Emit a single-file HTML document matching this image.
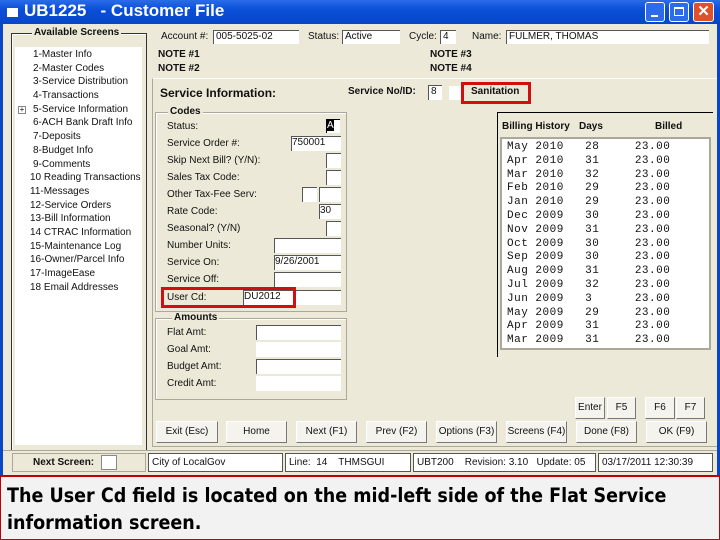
<!DOCTYPE html><html><head><style>
*{margin:0;padding:0;box-sizing:border-box}
body{width:720px;height:540px;position:relative;overflow:hidden;background:#ece9d8;font-family:"Liberation Sans",sans-serif;font-size:10px;color:#111}
.a{position:absolute}
.w{background:#fff}
.in{background:#fff;border-top:1px solid #555;border-left:1px solid #555}
.btn{position:absolute;background:#f4f3ee;border:1px solid #fff;border-right:1px solid #777;border-bottom:1px solid #777;text-align:center;font-size:10px;line-height:20px;height:22px}
.grp{position:absolute;border:1px solid #aca899;box-shadow:inset 1px 1px #fff}
.lt{position:absolute;background:#ece9d8;font-weight:bold;padding:0 2px}
.red{position:absolute;border:3px solid #d01010}
.mono{font-family:"Liberation Mono",monospace;font-size:11px;white-space:pre;line-height:13.8px}
.tree div{height:13.7px;line-height:13.7px;white-space:nowrap}
</style></head><body>
<div class="a" style="left:0;top:0;width:720px;height:24px;background:linear-gradient(#2a6be8,#0a4fd8 40%,#0846c8)"></div>
<div class="a" style="left:7px;top:8px;width:11px;height:9px;background:#fff"></div>
<div class="a" style="left:24px;top:1px;color:#fff;font-weight:bold;font-size:17px;white-space:pre">UB1225   - Customer File</div>
<div class="a" style="left:645px;top:2px;width:20px;height:20px;background:#2c6bea;border:1px solid #fff;border-radius:3px"><div class="a" style="left:5px;top:12px;width:7px;height:2px;background:#fff"></div></div>
<div class="a" style="left:669px;top:2px;width:20px;height:20px;background:#2c6bea;border:1px solid #fff;border-radius:3px"><div class="a" style="left:4px;top:4px;width:10px;height:9px;border:1px solid #fff;border-top:2px solid #fff"></div></div>
<div class="a" style="left:693px;top:2px;width:21px;height:20px;background:#e0502a;border:1px solid #fff;border-radius:3px;color:#fff;font-weight:bold;font-size:15px;text-align:center;line-height:18px">✕</div>
<div class="a" style="left:0;top:24px;width:3px;height:451px;background:#0846c8"></div>
<div class="a" style="left:717px;top:24px;width:3px;height:451px;background:#0846c8"></div>

<div class="grp" style="left:11px;top:33px;width:136px;height:418px;border-color:#333"></div>
<div class="lt" style="left:32px;top:27px">Available Screens</div>
<div class="a w tree" style="left:15px;top:47px;width:127px;height:398px;padding:1px 0 0 18px">
<div>1-Master Info</div><div>2-Master Codes</div><div>3-Service Distribution</div><div>4-Transactions</div><div>5-Service Information</div><div>6-ACH Bank Draft Info</div><div>7-Deposits</div><div>8-Budget Info</div><div>9-Comments</div><div style="margin-left:-3px">10 Reading Transactions</div><div style="margin-left:-3px">11-Messages</div><div style="margin-left:-3px">12-Service Orders</div><div style="margin-left:-3px">13-Bill Information</div><div style="margin-left:-3px">14 CTRAC Information</div><div style="margin-left:-3px">15-Maintenance Log</div><div style="margin-left:-3px">16-Owner/Parcel Info</div><div style="margin-left:-3px">17-ImageEase</div><div style="margin-left:-3px">18 Email Addresses</div></div>
<div class="a" style="left:18px;top:106px;width:8px;height:8px;border:1px solid #888;font-size:8px;line-height:6px;text-align:center;background:#fff">+</div>

<div class="a" style="left:161px;top:31px">Account #:</div><div class="a in" style="left:213px;top:30px;width:86px;height:14px;padding-left:2px">005-5025-02</div>
<div class="a" style="left:308px;top:31px">Status:</div><div class="a in" style="left:342px;top:30px;width:58px;height:14px;padding-left:2px">Active</div>
<div class="a" style="left:409px;top:31px">Cycle:</div><div class="a in" style="left:440px;top:30px;width:16px;height:14px;padding-left:2px">4</div>
<div class="a" style="left:472px;top:31px">Name:</div><div class="a in" style="left:506px;top:30px;width:203px;height:14px;padding-left:2px">FULMER, THOMAS</div>
<div class="a" style="left:158px;top:49px;font-weight:bold">NOTE #1</div><div class="a" style="left:158px;top:63px;font-weight:bold">NOTE #2</div>
<div class="a" style="left:430px;top:49px;font-weight:bold">NOTE #3</div><div class="a" style="left:430px;top:63px;font-weight:bold">NOTE #4</div>

<div class="a" style="left:152px;top:78px;width:565px;height:369px;border-top:1px solid #fff;border-left:1px solid #aca899;border-bottom:1px solid #aca899"></div>
<div class="a" style="left:160px;top:86px;font-weight:bold;font-size:12px">Service Information:</div>
<div class="a" style="left:348px;top:86px;font-weight:bold">Service No/ID:</div>
<div class="a in" style="left:428px;top:85px;width:14px;height:15px;padding-left:2px">8</div>
<div class="a w" style="left:449px;top:86px;width:14px;height:14px"></div>
<div class="a" style="left:471px;top:86px;font-weight:bold">Sanitation</div>
<div class="red" style="left:461px;top:82px;width:70px;height:22px"></div>

<div class="grp" style="left:155px;top:112px;width:192px;height:200px"></div>
<div class="lt" style="left:168px;top:106px">Codes</div>
<div class="a" style="left:167px;top:121px">Status:</div><div class="a" style="left:326px;top:119px;width:14px;height:14px;background:#fff;border-top:1px solid #000;border-left:1px solid #000"><span style="background:#000;color:#fff">A</span></div>
<div class="a" style="left:167px;top:138px">Service Order #:</div><div class="a in" style="left:291px;top:136px;width:50px;height:15px">750001</div>
<div class="a" style="left:167px;top:155px">Skip Next Bill? (Y/N):</div><div class="a in" style="left:326px;top:153px;width:15px;height:15px"></div>
<div class="a" style="left:167px;top:172px">Sales Tax Code:</div><div class="a in" style="left:326px;top:170px;width:15px;height:15px"></div>
<div class="a" style="left:167px;top:189px">Other Tax-Fee Serv:</div><div class="a in" style="left:302px;top:187px;width:15px;height:15px"></div><div class="a in" style="left:319px;top:187px;width:22px;height:15px"></div>
<div class="a" style="left:167px;top:206px">Rate Code:</div><div class="a in" style="left:319px;top:204px;width:22px;height:15px">30</div>
<div class="a" style="left:167px;top:223px">Seasonal? (Y/N)</div><div class="a in" style="left:326px;top:221px;width:15px;height:15px"></div>
<div class="a" style="left:167px;top:240px">Number Units:</div><div class="a in" style="left:274px;top:238px;width:67px;height:15px"></div>
<div class="a" style="left:167px;top:257px">Service On:</div><div class="a in" style="left:274px;top:255px;width:67px;height:15px">9/26/2001</div>
<div class="a" style="left:167px;top:274px">Service Off:</div><div class="a in" style="left:274px;top:272px;width:67px;height:15px"></div>
<div class="a" style="left:167px;top:292px">User Cd:</div><div class="a in" style="left:243px;top:290px;width:98px;height:15px">DU2012</div>
<div class="red" style="left:161px;top:287px;width:135px;height:21px"></div>

<div class="grp" style="left:155px;top:318px;width:192px;height:82px"></div>
<div class="lt" style="left:172px;top:312px">Amounts</div>
<div class="a" style="left:167px;top:327px">Flat Amt:</div><div class="a in" style="left:256px;top:325px;width:85px;height:15px"></div>
<div class="a" style="left:167px;top:344px">Goal Amt:</div><div class="a w" style="left:256px;top:342px;width:85px;height:15px"></div>
<div class="a" style="left:167px;top:361px">Budget Amt:</div><div class="a in" style="left:256px;top:359px;width:85px;height:15px"></div>
<div class="a" style="left:167px;top:378px">Credit Amt:</div><div class="a w" style="left:256px;top:376px;width:85px;height:15px"></div>

<div class="a" style="left:497px;top:112px;width:216px;height:245px;border-left:1px solid #000;border-top:1px solid #000"></div>
<div class="a" style="left:502px;top:121px;font-weight:bold">Billing History</div><div class="a" style="left:579px;top:121px;font-weight:bold">Days</div><div class="a" style="left:655px;top:121px;font-weight:bold">Billed</div>
<div class="a w mono" style="left:500px;top:137px;width:211px;height:213px;border:2px solid #aca899;padding:2px 0 0 5px;letter-spacing:0.5px">May 2010   28     23.00
Apr 2010   31     23.00
Mar 2010   32     23.00
Feb 2010   29     23.00
Jan 2010   29     23.00
Dec 2009   30     23.00
Nov 2009   31     23.00
Oct 2009   30     23.00
Sep 2009   30     23.00
Aug 2009   31     23.00
Jul 2009   32     23.00
Jun 2009   3      23.00
May 2009   29     23.00
Apr 2009   31     23.00
Mar 2009   31     23.00</div>

<div class="btn" style="left:575px;top:397px;width:30px">Enter</div><div class="btn" style="left:607px;top:397px;width:29px">F5</div>
<div class="btn" style="left:645px;top:397px;width:30px">F6</div><div class="btn" style="left:676px;top:397px;width:29px">F7</div>
<div class="btn" style="left:156px;top:421px;width:62px">Exit (Esc)</div>
<div class="btn" style="left:226px;top:421px;width:61px">Home</div>
<div class="btn" style="left:296px;top:421px;width:61px">Next (F1)</div>
<div class="btn" style="left:366px;top:421px;width:61px">Prev (F2)</div>
<div class="btn" style="left:436px;top:421px;width:61px">Options (F3)</div>
<div class="btn" style="left:506px;top:421px;width:61px">Screens (F4)</div>
<div class="btn" style="left:576px;top:421px;width:61px">Done (F8)</div>
<div class="btn" style="left:646px;top:421px;width:61px">OK (F9)</div>

<div class="a" style="left:3px;top:450px;width:714px;height:25px;background:#ece9d8;border-top:1px solid #aca899"></div>
<div class="a" style="left:12px;top:453px;width:134px;height:19px;border:1px solid #aca899;font-weight:bold;line-height:17px;padding-left:20px">Next Screen:</div>
<div class="a w" style="left:101px;top:455px;width:16px;height:15px;border:1px solid #888"></div>
<div class="a w" style="left:148px;top:453px;width:135px;height:19px;border:1px solid #555;line-height:17px;padding-left:3px">City of LocalGov</div>
<div class="a w" style="left:285px;top:453px;width:126px;height:19px;border:1px solid #555;line-height:17px;padding-left:3px;white-space:pre">Line:  14    THMSGUI</div>
<div class="a w" style="left:413px;top:453px;width:183px;height:19px;border:1px solid #555;line-height:17px;padding-left:3px;white-space:pre">UBT200    Revision: 3.10   Update: 05</div>
<div class="a w" style="left:598px;top:453px;width:115px;height:19px;border:1px solid #555;line-height:17px;padding-left:3px">03/17/2011 12:30:39</div>

<div class="a" style="left:0;top:475px;width:720px;height:65px;background:#f2f2f2;border:1px solid #c00000;border-top:2px solid #c00000;padding:5px 0 0 6px;font-size:19.5px;font-weight:bold;line-height:27px;color:#000;font-family:'DejaVu Sans Condensed',sans-serif">The User Cd field is located on the mid-left side of the Flat Service<br>information screen.</div>
</body></html>
